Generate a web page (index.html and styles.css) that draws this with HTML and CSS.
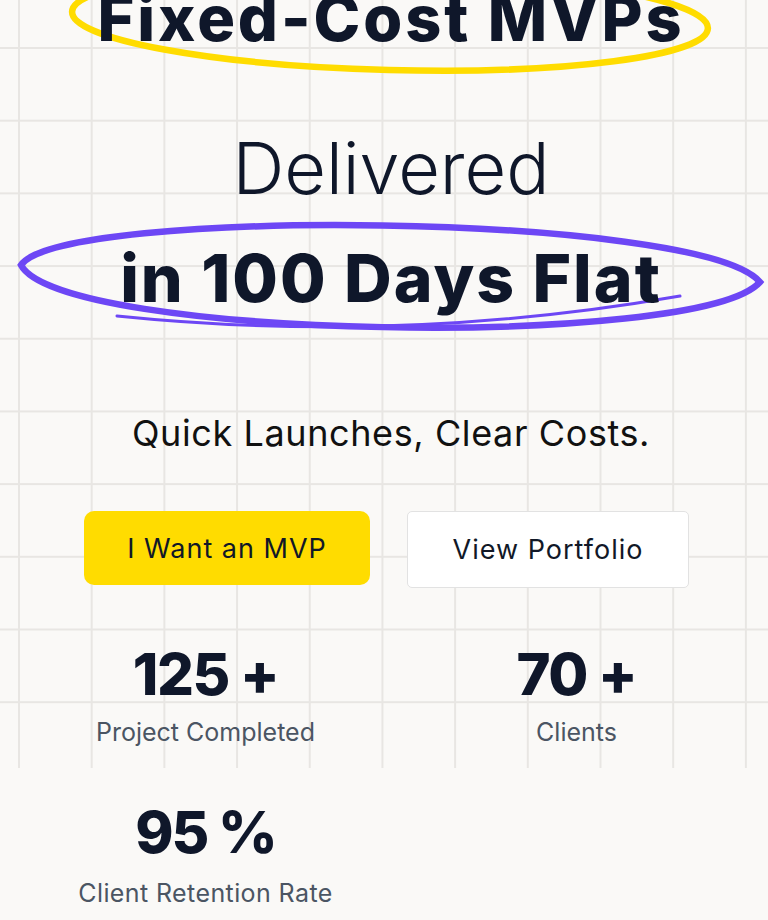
FILE: index.html
```html
<!DOCTYPE html>
<html lang="en">
<head>
<meta charset="utf-8">
<title>Fixed-Cost MVPs</title>
<link rel="stylesheet" href="styles.css">
</head>
<body>
<div class="page">
  <section class="hero">
    <svg class="scribbles" viewBox="0 0 768 360" width="768" height="360" aria-hidden="true">
      <ellipse cx="390" cy="20" rx="318" ry="50" transform="rotate(1.5 390 20)" fill="none" stroke="#ffdc00" stroke-width="6.5"/>
      <path d="M21 265 C60 207 700 212 760 282 C700 350 60 340 21 265 Z" fill="none" stroke="#6d47f5" stroke-width="6.5"/>
      <path d="M117 316 Q400 345 680 296" fill="none" stroke="#6d47f5" stroke-width="3" stroke-linecap="round"/>
    </svg>
    <h1 class="title-top">Fixed-Cost MVPs</h1>
    <p class="title-light">Delivered</p>
    <p class="title-heavy">in 100 Days Flat</p>
    <p class="tagline">Quick Launches, Clear Costs.</p>
    <div class="actions">
      <a class="btn btn-primary" href="#">I Want an MVP</a>
      <a class="btn btn-secondary" href="#">View Portfolio</a>
    </div>
  </section>
  <section class="stats">
    <div class="stat">
      <div class="stat-num">125 +</div>
      <div class="stat-label">Project Completed</div>
    </div>
    <div class="stat">
      <div class="stat-num">70 +</div>
      <div class="stat-label">Clients</div>
    </div>
    <div class="stat stat-row2">
      <div class="stat-num">95 %</div>
      <div class="stat-label">Client Retention Rate</div>
    </div>
  </section>
</div>
</body>
</html>
```
FILE: styles.css
```css
html, body {
  margin: 0;
  padding: 0;
  background: #faf9f7;
}
body {
  font-family: Inter, "Noto Sans", sans-serif;
  color: #0f172a;
  overflow: hidden;
}
.page {
  min-height: 920px;
  height: 920px;
  overflow: hidden;
  background-color: #faf9f7;
  background-image:
    linear-gradient(to bottom, rgba(250,249,247,0) 768px, #faf9f7 768px),
    linear-gradient(to right, #e8e6e3 2px, rgba(0,0,0,0) 2px),
    linear-gradient(to bottom, #e8e6e3 2px, rgba(0,0,0,0) 2px);
  background-size: 100% 100%, 72.7px 72.7px, 72.7px 72.7px;
  background-position: 0 0, 18px 0, 0 47px;
  background-repeat: no-repeat, repeat, repeat;
}
.hero {
  position: relative;
  display: flex;
  flex-direction: column;
  align-items: center;
  padding-left: 14px;
}
.scribbles {
  position: absolute;
  left: 0;
  top: 0;
  pointer-events: none;
}
.title-top, .title-light, .title-heavy, .tagline {
  position: relative;
  margin: 0;
  white-space: nowrap;
}
.title-top {
  font-size: 63px;
  line-height: 62px;
  font-weight: 800;
  margin-top: -13px;
  letter-spacing: 2.9px;
}
.title-light {
  font-size: 72px;
  line-height: 70px;
  font-weight: 300;
  margin-top: 84px;
}
.title-heavy {
  font-size: 66px;
  line-height: 65px;
  font-weight: 800;
  margin-top: 43px;
  letter-spacing: 2px;
}
.tagline {
  font-size: 36px;
  line-height: 36px;
  font-weight: 400;
  margin-top: 104px;
  color: #111;
  letter-spacing: 0.6px;
}
.actions {
  display: flex;
  gap: 37px;
  align-items: flex-start;
  margin-top: 60px;
  padding-right: 9px;
}
.btn {
  display: flex;
  align-items: center;
  justify-content: center;
  box-sizing: border-box;
  text-decoration: none;
  color: #111827;
  font-size: 27px;
  font-weight: 400;
  letter-spacing: 1px;
}
.btn-primary {
  width: 286px;
  height: 74px;
  background: #ffdc00;
  border-radius: 10px;
}
.btn-secondary {
  width: 282px;
  height: 77px;
  background: #fff;
  border: 1px solid #e2e2e2;
  border-radius: 5px;
}
.stats {
  display: grid;
  grid-template-columns: 371px 371px;
  justify-content: center;
  padding-left: 14px;
  margin-top: 57px;
  row-gap: 58px;
}
.stat {
  display: flex;
  flex-direction: column;
  align-items: center;
}
.stat-num {
  font-size: 58px;
  line-height: 58px;
  font-weight: 800;
  color: #0f172a;
  letter-spacing: -1.5px;
}
.stat-label {
  font-size: 25px;
  line-height: 25px;
  color: #4b5563;
  margin-top: 17px;
}
.stat-row2 .stat-num {
  letter-spacing: -2px;
}
.stat-row2 .stat-label {
  letter-spacing: 0.4px;
  margin-top: 20px;
}
```
